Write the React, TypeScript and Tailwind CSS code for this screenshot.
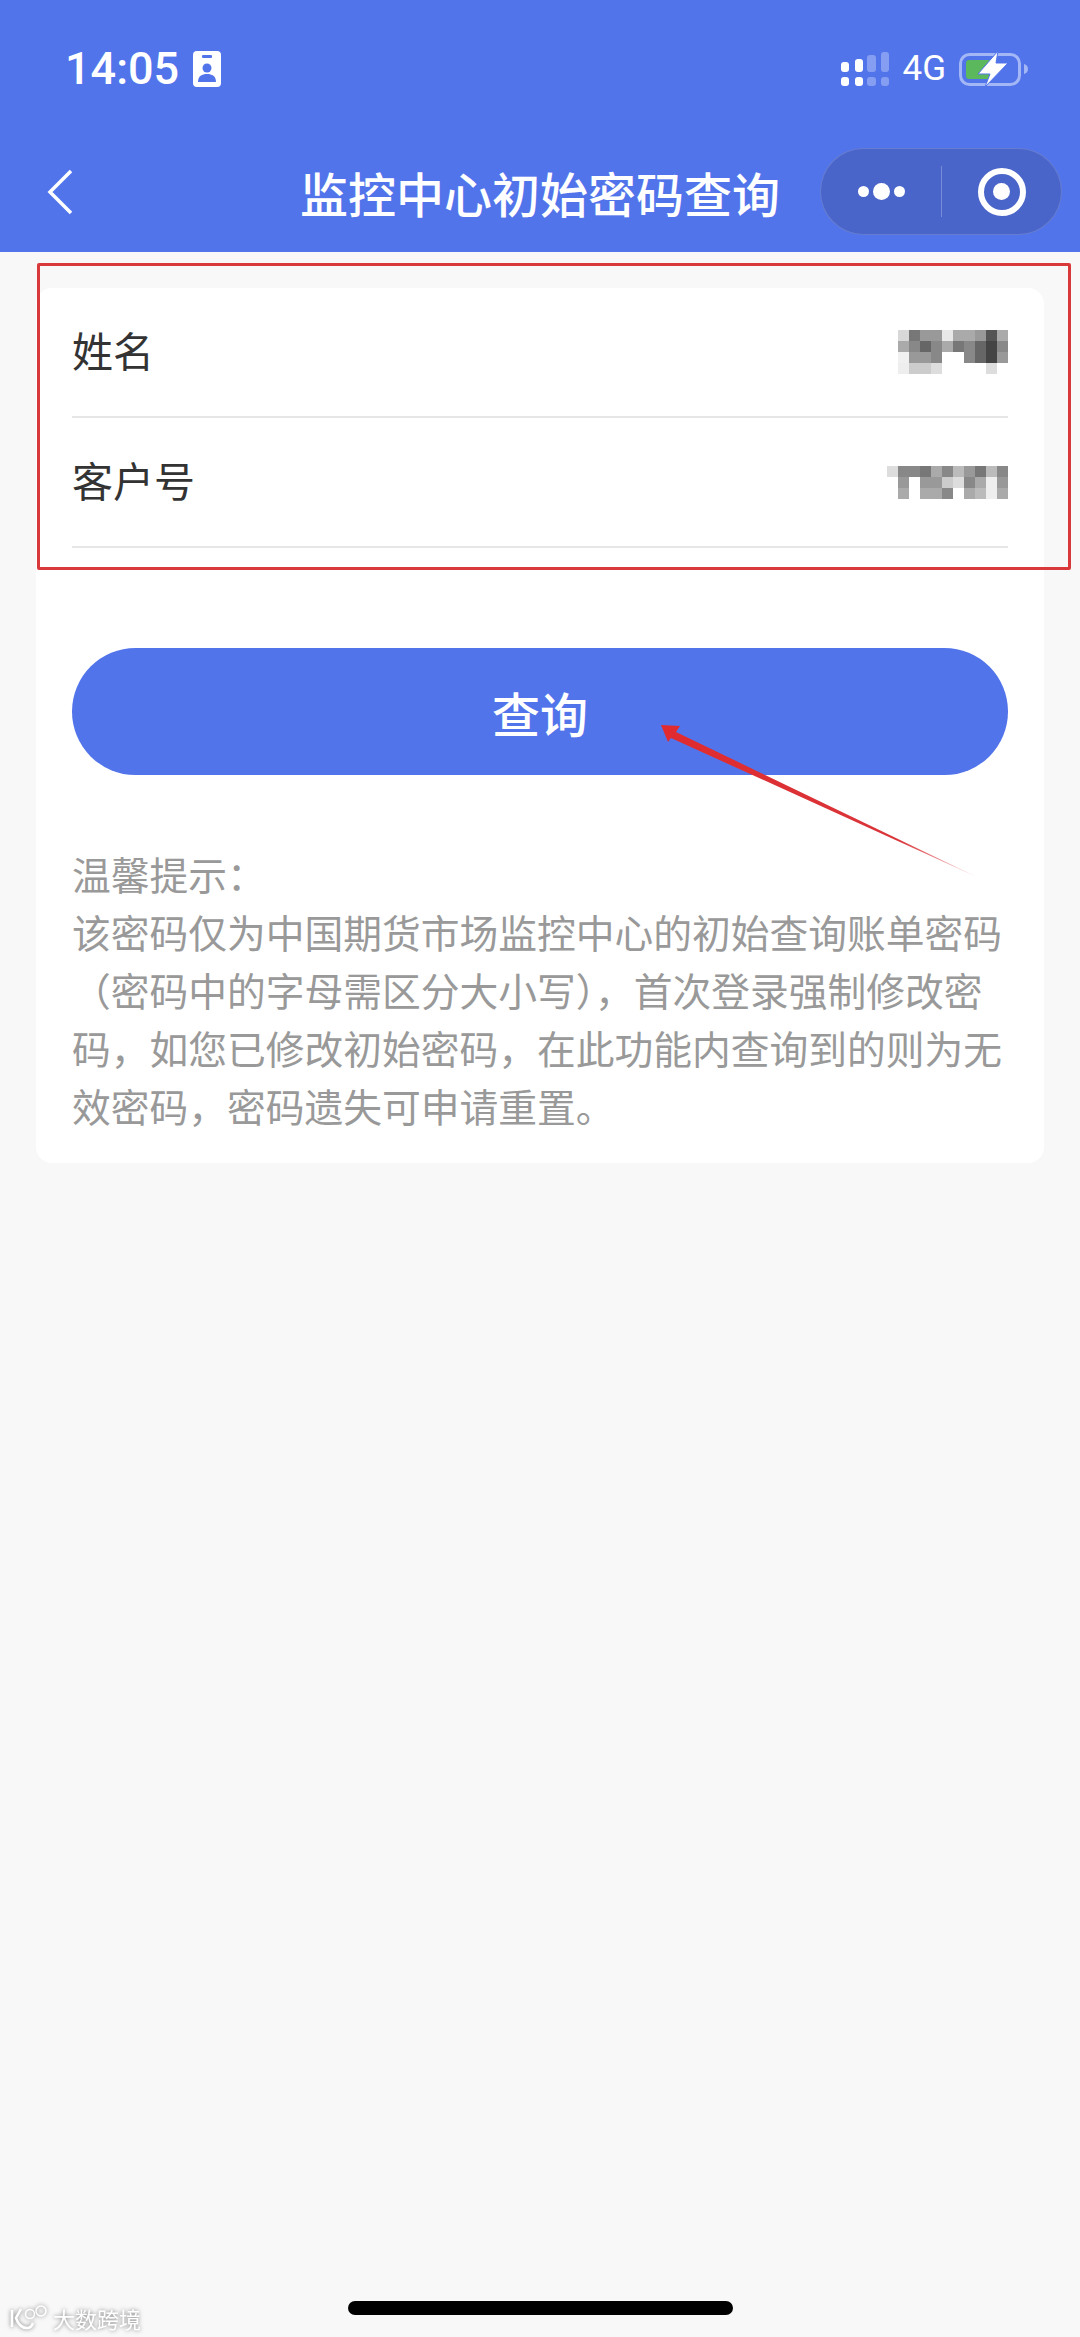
const nameBlur = [
  ["#d8d8d8", "#777777", "#999999", "#999999", "#e8e8e8", "#aaaaaa", "#aaaaaa", "#999999", "#555555", "#aaaaaa"],
  ["#aaaaaa", "#888888", "#666666", "#888888", "#aaaaaa", "#777777", "#888888", "#666666", "#444444", "#888888"],
  ["#f0f0f0", "#999999", "#999999", "#888888", "#ffffff", "#ffffff", "#888888", "#666666", "#444444", "#999999"],
  ["#eeeeee", "#cccccc", "#cccccc", "#dddddd", "#ffffff", "#ffffff", "#ffffff", "#ffffff", "#dddddd", "#ffffff"],
];

const idBlur = [
  ["#dddddd", "#888888", "#888888", "#777777", "#aaaaaa", "#888888", "#bbbbbb", "#999999", "#777777", "#bbbbbb", "#888888"],
  ["#ffffff", "#999999", "#ffffff", "#999999", "#999999", "#cccccc", "#dddddd", "#888888", "#aaaaaa", "#eeeeee", "#999999"],
  ["#ffffff", "#aaaaaa", "#ffffff", "#aaaaaa", "#aaaaaa", "#888888", "#ffffff", "#aaaaaa", "#bbbbbb", "#eeeeee", "#aaaaaa"],
];

function Mosaic({ cells }: { cells: string[][] }) {
  const cols = cells[0].length;
  return (
    <svg width={cols * 11} height={cells.length * 11} viewBox={`0 0 ${cols * 11} ${cells.length * 11}`} shapeRendering="crispEdges">
      {cells.map((row, y) =>
        row.map((fill, x) => <rect key={`${x}-${y}`} x={x * 11} y={y * 11} width="11" height="11" fill={fill} />)
      )}
    </svg>
  );
}

function SignalIcon() {
  return (
    <svg width="48" height="34" viewBox="0 0 48 34">
      <rect x="0" y="10" width="8" height="10" rx="3" fill="#fff" />
      <rect x="14" y="7" width="8" height="13" rx="3" fill="#fff" />
      <rect x="0" y="25" width="8" height="9" rx="3" fill="#fff" />
      <rect x="14" y="25" width="8" height="9" rx="3" fill="#fff" />
      <rect x="26" y="3" width="9" height="17" rx="3" fill="#fff" fillOpacity="0.3" />
      <rect x="40" y="0" width="8" height="20" rx="3" fill="#fff" fillOpacity="0.3" />
      <rect x="26" y="25" width="9" height="9" rx="3" fill="#fff" fillOpacity="0.3" />
      <rect x="40" y="25" width="8" height="9" rx="3" fill="#fff" fillOpacity="0.3" />
    </svg>
  );
}

function BatteryIcon() {
  return (
    <svg width="70" height="38" viewBox="0 0 70 38">
      <rect x="1.5" y="4.5" width="59" height="30" rx="9" fill="none" stroke="#a3b6f5" strokeWidth="3" />
      <path d="M7 13a3 3 0 0 1 3-3h24v19H10a3 3 0 0 1-3-3z" fill="#5cb85c" />
      <path d="M65 14c2.500 .5 4 2.500 4 5s-1.500 4.500-4 5z" fill="#a3b6f5" />
      <path d="M39 1 19 24h12l-5 13 23-24H37z" fill="#fff" stroke="#5274eb" strokeWidth="1" />
    </svg>
  );
}

function StatusBar() {
  return (
    <div className="flex h-[60px] items-center justify-between pl-[65px] pr-[51px] text-white">
      <div className="flex items-center gap-[14px]">
        <span className="text-[45px] font-medium [font-family:Roboto,sans-serif]">14:05</span>
        <svg width="28" height="36" viewBox="0 0 28 36">
          <rect width="28" height="36" rx="4" fill="#fff" />
          <rect x="9" y="4" width="10" height="3" rx="1" fill="#5274eb" />
          <circle cx="14" cy="17" r="4.500" fill="#5274eb" />
          <path d="M5 31c0-6 4-8 9-8s9 2 9 8z" fill="#5274eb" />
        </svg>
      </div>
      <div className="flex items-center">
        <SignalIcon />
        <span className="ml-[13px] text-[35px] [font-family:Roboto,sans-serif]">4G</span>
        <span className="ml-[13px]">
          <BatteryIcon />
        </span>
      </div>
    </div>
  );
}

function Capsule() {
  return (
    <div className="flex h-[87px] w-[242px] items-center rounded-full border border-white/15 bg-[#4a65c9]">
      <div className="flex h-full w-[120px] items-center justify-center gap-[4px]">
        <span className="size-[11px] rounded-full bg-white" />
        <span className="size-[17px] rounded-full bg-white" />
        <span className="size-[11px] rounded-full bg-white" />
      </div>
      <div className="h-[51px] w-px bg-white/25" />
      <div className="flex h-full flex-1 items-center justify-center">
        <div className="flex size-[48px] items-center justify-center rounded-full border-[6px] border-white">
          <span className="size-[17px] rounded-full bg-white" />
        </div>
      </div>
    </div>
  );
}

function Header() {
  return (
    <header className="h-[252px] bg-[#5274eb] pt-[39px]">
      <StatusBar />
      {/* nav row */}
      <div className="mt-[49px] grid grid-cols-[1fr_auto_1fr] items-center px-[18px]">
        <svg className="ml-[29px]" width="26" height="46" viewBox="0 0 26 46" fill="none">
          <path d="M24 2 3 23l21 21" stroke="#fff" strokeWidth="3.500" />
        </svg>
        <h1 className="text-[48px] font-medium leading-none text-white">监控中心初始密码查询</h1>
        <div className="justify-self-end">
          <Capsule />
        </div>
      </div>
    </header>
  );
}

function FormRow({ label, cells }: { label: string; cells: string[][] }) {
  return (
    <div className="flex h-[130px] items-center justify-between border-b-2 border-[#e6e6e6]">
      <span className="pb-[5px] text-[41px] text-[#333333]">{label}</span>
      <Mosaic cells={cells} />
    </div>
  );
}

export default function App() {
  return (
    <div className="relative h-[2337px] w-[1080px] overflow-hidden bg-[#f8f8f8] [font-family:'Noto_Sans_CJK_SC','Liberation_Sans',sans-serif]">
      <Header />

      <main className="mx-[36px] mt-[36px] rounded-[16px] bg-white px-[36px] pb-[29px]">
        <FormRow label="姓名" cells={nameBlur} />
        <FormRow label="客户号" cells={idBlur} />

        <button className="mt-[100px] flex h-[127px] w-full items-center justify-center rounded-full bg-[#5274eb] text-[48px] font-medium text-white">
          查询
        </button>

        <div className="mt-[69px] whitespace-nowrap text-[38.75px] leading-[58px] text-[#999999]">
          <p>温馨提示：</p>
          <p>该密码仅为中国期货市场监控中心的初始查询账单密码</p>
          <p>（密码中的字母需区分大小写），首次登录强制修改密</p>
          <p>码，如您已修改初始密码，在此功能内查询到的则为无</p>
          <p>效密码，密码遗失可申请重置。</p>
        </div>
      </main>

      {/* red annotation box */}
      <div className="absolute left-[37px] top-[263px] h-[307px] w-[1034px] rounded-[2px] border-[3px] border-[#d9393b]" />

      {/* red annotation arrow */}
      <svg className="absolute left-[650px] top-[715px]" width="340" height="170" viewBox="0 0 340 170">
        <defs>
          <linearGradient id="arrowFade" x1="0" y1="0" x2="1" y2="1">
            <stop offset="0" stopColor="#e02a2f" />
            <stop offset="0.75" stopColor="#d9363a" />
            <stop offset="1" stopColor="#d9363a" stopOpacity="0.15" />
          </linearGradient>
        </defs>
        <path d="M11 10 30 11 26 17 329 163 21 23 18 27z" fill="url(#arrowFade)" />
      </svg>

      {/* home indicator */}
      <div className="absolute bottom-[22px] left-[348px] h-[14px] w-[385px] rounded-full bg-black" />

      {/* watermark */}
      <div className="absolute bottom-[6px] left-[10px] flex items-center gap-[5px] [filter:drop-shadow(0_0_2px_rgba(0,0,0,0.5))]">
        <svg width="38" height="26" viewBox="0 0 38 26" fill="none" stroke="#fff" strokeWidth="2.500">
          <path d="M2 5v17" />
          <path d="M11 4 6 13c2 6 6 10 11 10 3 0 5-2 6-5" />
          <circle cx="20" cy="9" r="4.500" strokeWidth="1.500" />
          <circle cx="31" cy="6" r="5" strokeWidth="1.500" />
        </svg>
        <span className="text-[22px] leading-none text-white">大数跨境</span>
      </div>
    </div>
  );
}
